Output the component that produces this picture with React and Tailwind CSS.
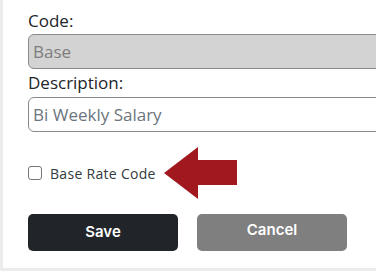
import React from "react";

function RedArrow() {
  return (
    <svg width="73" height="52" viewBox="0 0 73 52" className="ml-[8px] shrink-0">
      <polygon points="0,26 34,0 34,13 73,13 73,38 34,38 34,52" fill="#a1191f" />
    </svg>
  );
}

export default function App() {
  return (
    <div className="w-[376px] h-[271px] overflow-hidden bg-[#ececec] pl-[3px] pb-[3px]">
      <div
        className="h-full w-[420px] bg-white pl-[25px] pt-[10px]"
        style={{ fontFamily: '"Open Sans", sans-serif' }}
      >
        <label className="block text-[17px] leading-[22px] text-[#212529]">Code:</label>
        <input
          disabled
          value="Base"
          readOnly
          className="mt-[2px] block h-[35px] w-[380px] rounded-[6px] border border-[#8a8a8a] bg-[#d3d3d3] px-[4px] text-[17px] text-[#7d7d7d] outline-none"
        />
        <label className="mt-[3px] block text-[17px] leading-[22px] text-[#212529]">
          Description:
        </label>
        <input
          value="Bi Weekly Salary"
          readOnly
          className="mt-[3px] block h-[35px] w-[380px] rounded-[6px] border border-[#8a8a8a] bg-white px-[4px] text-[17px] text-[#6c757d] outline-none"
        />

        <div className="mt-[15px] flex items-center">
          <input
            type="checkbox"
            className="h-[14px] w-[14px] appearance-none rounded-[3px] border border-[#767676] bg-white"
          />
          <span className="ml-[8px] text-[14px] tracking-[0.3px] text-[#343a40]">Base Rate Code</span>
          <RedArrow />
        </div>

        <div className="mt-[15px] flex gap-[19px]" style={{ fontFamily: "Inter, sans-serif" }}>
          <button className="h-[37px] w-[150px] rounded-[5px] bg-[#212529] text-[15px] font-semibold text-white">
            Save
          </button>
          <button className="h-[37px] w-[150px] rounded-[5px] bg-[#7f7f7f] pb-[4px] text-[15px] font-semibold text-white">
            Cancel
          </button>
        </div>
      </div>
    </div>
  );
}
